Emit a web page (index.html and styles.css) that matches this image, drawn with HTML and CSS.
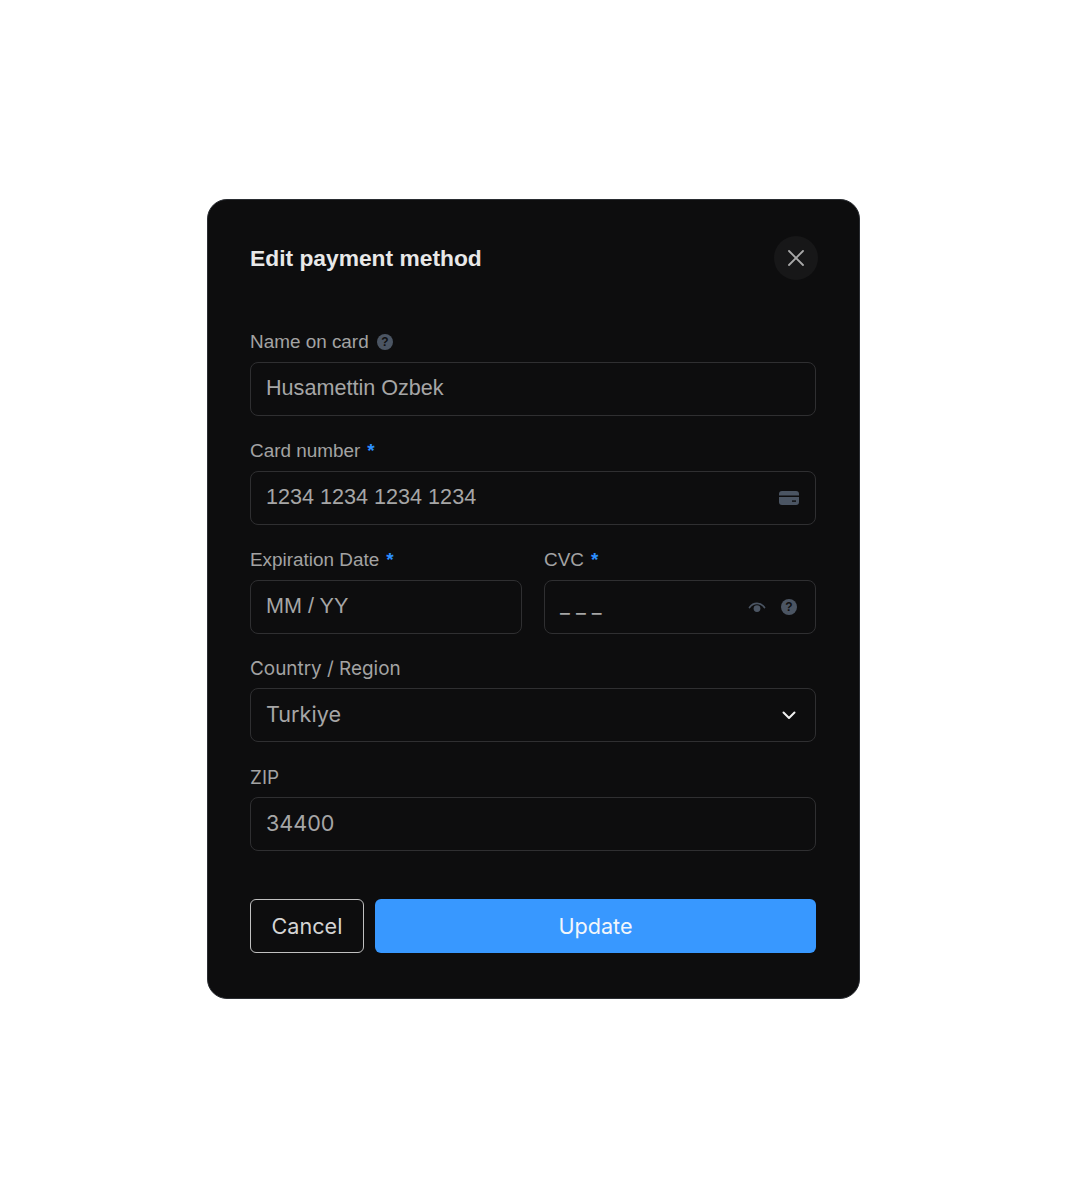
FILE: index.html
```html
<!DOCTYPE html>
<html>
<head>
	<title>Edit payment method</title>
	<meta charset="utf-8">
	<link rel="stylesheet" href="styles.css">
</head>
<body>
<div class="modal">
	<div class="modal_head">
		<h1>Edit payment method</h1>
		<div class="close">
			<svg width="18" height="18" viewBox="0 0 18 18"><path d="M2 2L16 16M16 2L2 16" stroke="#a8a8a8" stroke-width="1.8" stroke-linecap="round" fill="none"/></svg>
		</div>
	</div>
	<div class="fields">
		<div class="field">
			<div class="label">Name on card
				<svg class="help" width="16" height="16" viewBox="0 0 16 16"><circle cx="8" cy="8" r="8" fill="#4b5563"/><text x="8" y="12" text-anchor="middle" class="help_mark">?</text></svg>
			</div>
			<div class="input">Husamettin Ozbek</div>
		</div>
		<div class="field">
			<div class="label">Card number <span class="req">*</span></div>
			<div class="input">1234 1234 1234 1234
				<svg class="icon_card" width="20" height="14" viewBox="0 0 20 14"><path d="M0 4.4V3a3 3 0 0 1 3-3h14a3 3 0 0 1 3 3v1.4z" fill="#4b5563"/><path d="M0 6h20v5a3 3 0 0 1-3 3H3a3 3 0 0 1-3-3z" fill="#4b5563"/><rect x="13" y="9.4" width="4" height="1.4" fill="#0f0f10"/></svg>
			</div>
		</div>
		<div class="field_row">
			<div class="field">
				<div class="label">Expiration Date <span class="req">*</span></div>
				<div class="input">MM / YY</div>
			</div>
			<div class="field">
				<div class="label">CVC <span class="req">*</span></div>
				<div class="input">
					<span class="cvc">_ _ _</span>
					<span class="input_icons">
						<svg width="18" height="12" viewBox="0 0 18 12"><path d="M1.5 6.5C5.5 1 12.5 1 16.5 6.5" stroke="#4b5563" stroke-width="1.7" fill="none" stroke-linecap="round"/><circle cx="9" cy="7.6" r="3.4" fill="#4b5563"/></svg>
						<svg width="16" height="16" viewBox="0 0 16 16"><circle cx="8" cy="8" r="8" fill="#4b5563"/><text x="8" y="12" text-anchor="middle" class="help_mark">?</text></svg>
					</span>
				</div>
			</div>
		</div>
		<div class="field">
			<div class="label inter">Country / Region</div>
			<div class="input inter">Turkiye
				<svg class="icon_chevron" width="14" height="9" viewBox="0 0 14 9"><path d="M1.5 1.5L7 7L12.5 1.5" stroke="#f0f0f0" stroke-width="2" fill="none" stroke-linecap="round" stroke-linejoin="round"/></svg>
			</div>
		</div>
		<div class="field">
			<div class="label inter">ZIP</div>
			<div class="input inter">34400</div>
		</div>
	</div>
	<div class="buttons">
		<a href="" class="btn cancel">Cancel</a>
		<a href="" class="btn update">Update</a>
	</div>
</div>
</body>
</html>
```

FILE: styles.css
```css
body, h1 {
	margin: 0;
	padding: 0;
}
body {
	display: flex;
	justify-content: center;
	padding: 199px 0 0 1px;
	min-height: 1001px;
	background-color: #fff;
	font-family: "Liberation Sans", Arial, sans-serif;
}
a {
	text-decoration: none;
}
.modal {
	box-sizing: border-box;
	width: 653px;
	height: 800px;
	padding: 36px 43px 0 42px;
	background-color: #0d0d0e;
	border: 1px solid #2a2d32;
	border-radius: 20px;
}
.modal_head {
	display: flex;
	align-items: center;
	justify-content: space-between;
	margin-right: -2px;
	height: 44px;
}
.modal_head h1 {
	font-size: 22.8px;
	font-weight: 700;
	color: #e8e8e8;
}
.close {
	display: flex;
	align-items: center;
	justify-content: center;
	width: 44px;
	height: 44px;
	border-radius: 50%;
	background-color: #171718;
}
.fields {
	display: flex;
	flex-direction: column;
	gap: 23.75px;
	margin-top: 51px;
}
.field_row {
	display: grid;
	grid-template-columns: 1fr 1fr;
	gap: 22px;
}
.label {
	display: flex;
	align-items: center;
	gap: 8px;
	height: 22px;
	margin-bottom: 9px;
	font-size: 18.9px;
	color: #a3a3a3;
}
.inter {
	font-family: Inter, "Liberation Sans", sans-serif;
}
.req {
	margin-left: -1px;
	font-weight: 700;
	color: #2c8fff;
}
.help_mark {
	font-family: "Liberation Sans", Arial, sans-serif;
	font-size: 12px;
	font-weight: 700;
	fill: #0f0f10;
}
.input {
	display: flex;
	align-items: center;
	justify-content: space-between;
	box-sizing: border-box;
	height: 54px;
	padding: 0 16px 2px 15px;
	border: 1px solid #2f2f31;
	border-radius: 8px;
	font-size: 21.6px;
	color: #a6a6a6;
}
.input svg {
	position: relative;
	top: 1px;
}
.input .icon_chevron {
	margin-right: 3px;
}
.cvc {
	padding-bottom: 2px;
	font-family: Inter, "Liberation Sans", sans-serif;
}
.input_icons {
	display: flex;
	align-items: center;
	gap: 15px;
	margin-right: 2px;
}
.buttons {
	display: flex;
	gap: 11px;
	margin-top: 48px;
}
.btn {
	display: flex;
	align-items: center;
	justify-content: center;
	box-sizing: border-box;
	height: 54px;
	border-radius: 6px;
	font-family: Inter, "Liberation Sans", sans-serif;
	font-size: 21.6px;
}
.cancel {
	width: 114px;
	border: 1px solid #c0c0c0;
	color: #d4d4d4;
}
.update {
	flex: 1;
	background-color: #3898ff;
	color: #f2f6fb;
}
```
